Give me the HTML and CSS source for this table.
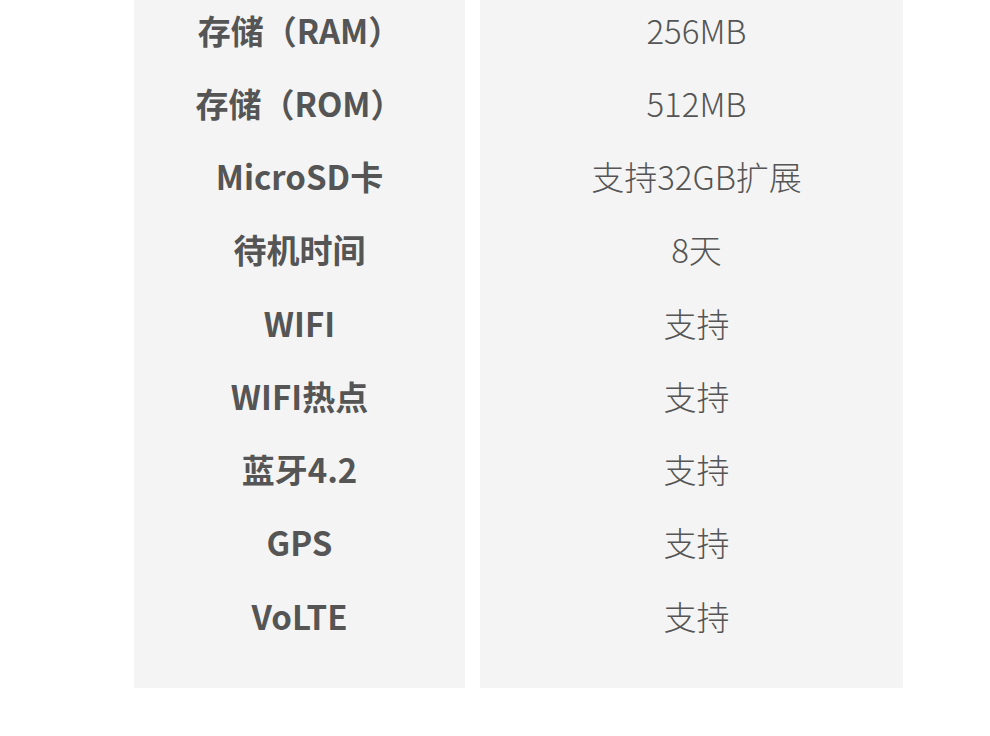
FILE: index.html
```html
<!DOCTYPE html>
<html lang="zh">
<head>
<meta charset="utf-8">
<link rel="stylesheet" href="styles.css">
</head>
<body>
<div class="spec">
  <div class="col col-left">
    <div class="row">存储（RAM）</div>
    <div class="row">存储（ROM）</div>
    <div class="row">MicroSD卡</div>
    <div class="row">待机时间</div>
    <div class="row">WIFI</div>
    <div class="row">WIFI热点</div>
    <div class="row">蓝牙4.2</div>
    <div class="row">GPS</div>
    <div class="row">VoLTE</div>
  </div>
  <div class="col col-right">
    <div class="row">256MB</div>
    <div class="row">512MB</div>
    <div class="row">支持32GB扩展</div>
    <div class="row">8天</div>
    <div class="row">支持</div>
    <div class="row">支持</div>
    <div class="row">支持</div>
    <div class="row">支持</div>
    <div class="row">支持</div>
  </div>
</div>
</body>
</html>
```
FILE: styles.css
```css
html, body {
  margin: 0;
  padding: 0;
  background: #ffffff;
}
body {
  font-family: "Noto Sans CJK SC", "Noto Sans", sans-serif;
  color: #555555;
  overflow: hidden;
}
.spec {
  display: flex;
  gap: 15px;
  margin-top: -6.5px;
  padding-left: 134px;
}
.col {
  background: #f4f4f4;
  padding-bottom: 35.5px;
}
.col-left {
  width: 331px;
  font-weight: 700;
}
.col-right {
  width: 423px;
  padding-left: 10px;
  box-sizing: border-box;
  font-weight: 300;
}
.row {
  height: 73.25px;
  line-height: 73.25px;
  font-size: 33px;
  text-align: center;
  white-space: nowrap;
}
```
